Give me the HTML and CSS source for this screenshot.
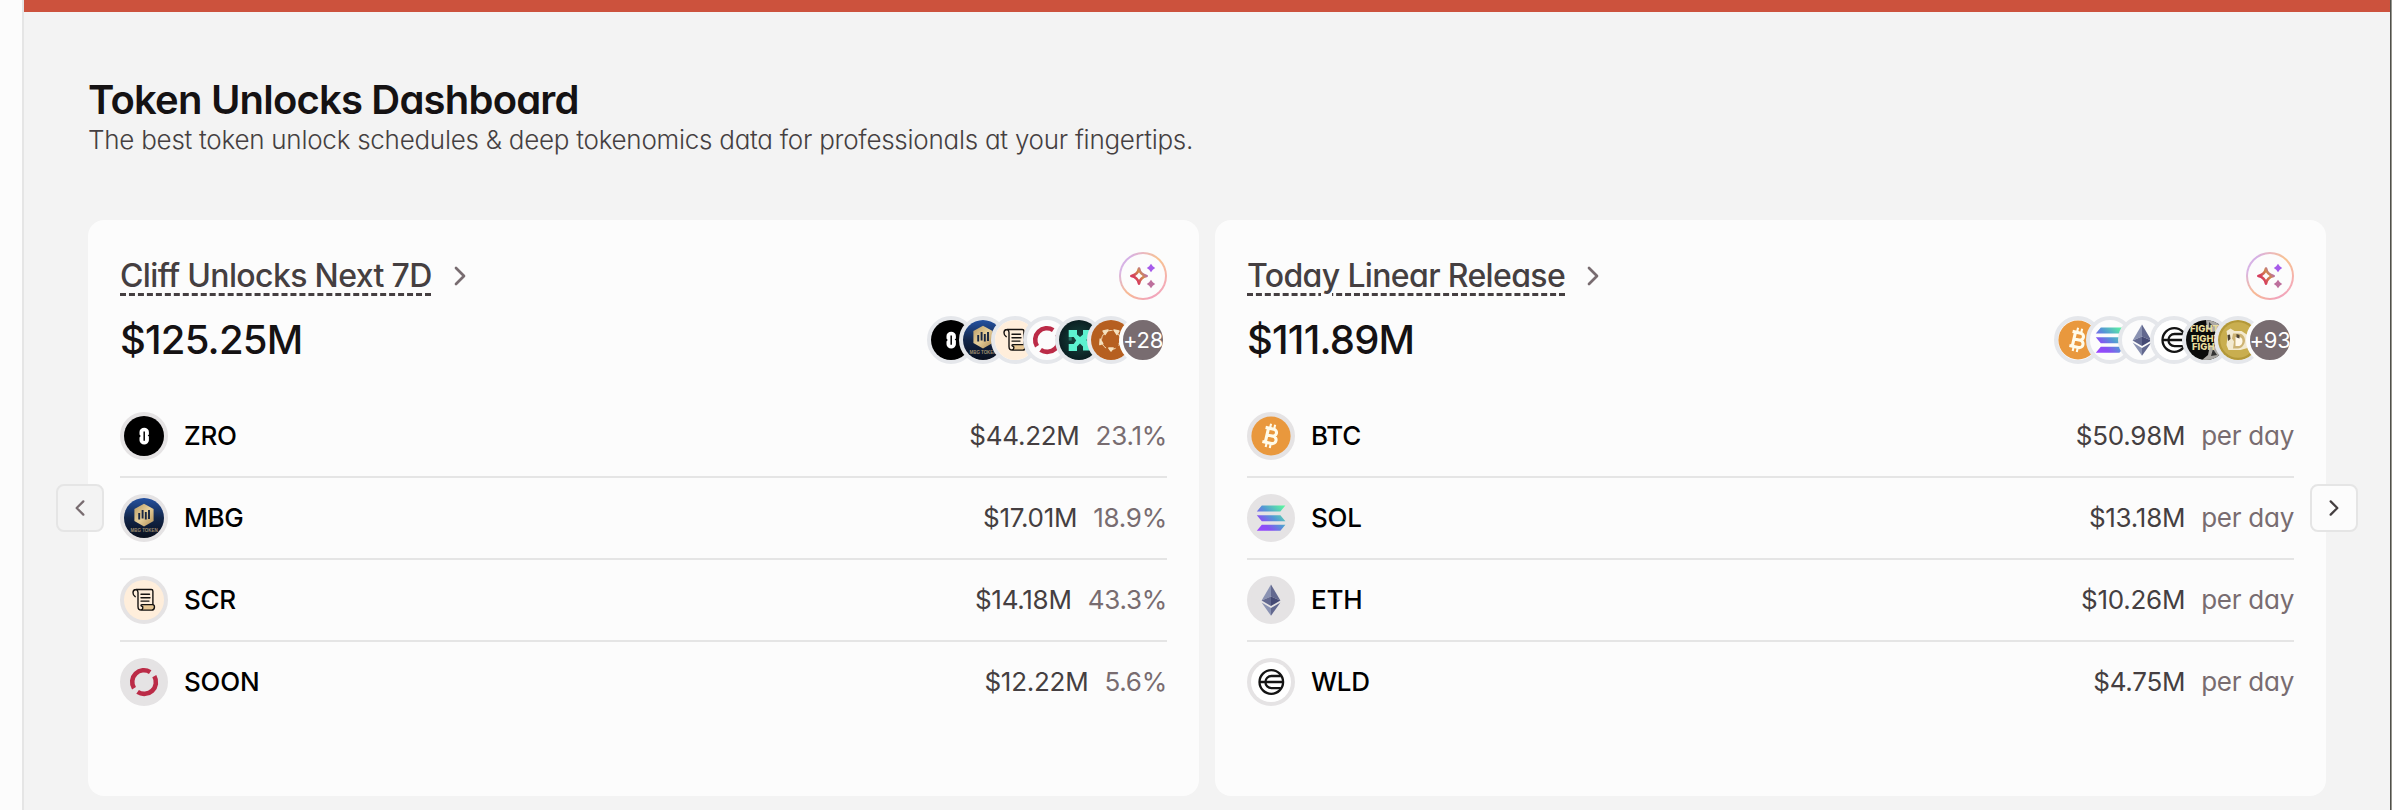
FILE: index.html
```
<!DOCTYPE html>
<html lang="en">
<head>
<meta charset="utf-8">
<title>Token Unlocks Dashboard</title>
<link rel="stylesheet" href="styles.css">
</head>
<body>
<svg class="defs" width="0" height="0" aria-hidden="true">
  <defs>
    <linearGradient id="g-mbg" x1="0" y1="0" x2="0" y2="1"><stop offset="0" stop-color="#2451a0"/><stop offset=".5" stop-color="#12264a"/><stop offset="1" stop-color="#090f1c"/></linearGradient>
    <linearGradient id="g-gold" x1="0" y1="0" x2="1" y2="1"><stop offset="0" stop-color="#b89a63"/><stop offset=".5" stop-color="#e6cf9b"/><stop offset="1" stop-color="#b08d55"/></linearGradient>
    <linearGradient id="g-sol" gradientUnits="userSpaceOnUse" x1="8" y1="32" x2="32" y2="8"><stop offset="0" stop-color="#9945ff"/><stop offset=".25" stop-color="#8752f3"/><stop offset=".55" stop-color="#5497d5"/><stop offset="1" stop-color="#5bf5a0"/></linearGradient>
    <linearGradient id="g-ai" gradientUnits="userSpaceOnUse" x1="11" y1="28" x2="30" y2="14"><stop offset="0" stop-color="#d6345f"/><stop offset=".2" stop-color="#d6405c"/><stop offset=".5" stop-color="#d08a4c"/><stop offset=".8" stop-color="#a85be0"/><stop offset="1" stop-color="#a855f7"/></linearGradient>
    <radialGradient id="g-teal"><stop offset="0" stop-color="#174840"/><stop offset="1" stop-color="#0b1f22"/></radialGradient>
    <clipPath id="disc"><circle cx="20" cy="20" r="20"/></clipPath>
  </defs>
  <symbol id="zro" viewBox="0 0 40 40">
    <circle cx="20" cy="20" r="20" fill="#000"/>
    <path d="M15.500 18.400V16a4.700 4.200 0 0 1 9.400 0v2.600l-1.200 1 1.200 1v3.600a4.700 4.200 0 0 1-9.400 0v-2.800l1.200-1.400z" fill="#fff"/>
    <path d="M20.200 15.600v9.200" stroke="#000" stroke-width="1.500"/>
  </symbol>
  <symbol id="mbg" viewBox="0 0 40 40">
    <circle cx="20" cy="20" r="20" fill="url(#g-mbg)"/>
    <path d="M20 5.800 29.600 11v12L20 28.400 10.400 23V11z" fill="url(#g-gold)"/>
    <path d="M15.200 15v6.500M18.600 12v8.500M21.800 14v7.500M25 12v9" stroke="#182742" stroke-width="1.900"/>
    <text class="mbg-label" x="20" y="34.300" text-anchor="middle" textLength="27">MBG TOKEN</text>
  </symbol>
  <symbol id="scr" viewBox="0 0 40 40">
    <circle cx="20" cy="20" r="20" fill="#ffeedb"/>
    <path d="M19 24.600h9.500c3 0 2.600 5.400-.6 5.400H16.500c2.500-.8 1.500-3.400 2.500-5.400z" fill="#e8c896"/>
    <path d="M28.900 24.300V11.200c0-1.100-.5-1.700-1.600-1.700H12c-2.100.1-3 1.700-3 3.300 0 1.700.8 3 2.200 3.900M12 9.500c1.600.4 2 1.500 2 3v14c0 2.200 1.100 3.600 3.200 3.600h10.500c3.400 0 3.600-5.500.9-5.500H17.800c-1.200.1-.9 1.700.1 1.700 1.500.3 1.200 3.400-1 3.700M17 14.300h8.500M17 17.700h9M17 21.100h8" fill="none" stroke="#161311" stroke-width="1.400" stroke-linecap="round"/>
  </symbol>
  <symbol id="soon" viewBox="0 0 40 40">
    <path d="M10 26.200A11.700 11.700 0 0 1 26.200 10.100M30.300 14.200A11.700 11.700 0 0 1 13.600 29.800" fill="none" stroke="#bb2b47" stroke-width="4.600"/>
  </symbol>
  <symbol id="xai" viewBox="0 0 40 40">
    <circle cx="20" cy="20" r="20" fill="url(#g-teal)"/>
    <path d="M9.700 10H18v4.500l3 2.500 3-2.500V10h8v7l-5 3 5 3v7.500h-8v-4l-3-3-3 3v4.500H9.700V24h5l2.500-3.500-2.500-3.500h-5z" fill="#5df2cf"/>
    <path d="M9.700 17h3v3.500h-3z" fill="#5df2cf" opacity=".35"/>
  </symbol>
  <symbol id="ring" viewBox="0 0 40 40">
    <circle cx="20" cy="20" r="20" fill="#b65f20"/>
    <circle cx="20" cy="20" r="9.500" fill="none" stroke="#f2d9b0" stroke-width="1" stroke-dasharray="6 4"/>
    <path d="m12 11 5-1-3 4.500zM28 11l-5-1 3 4.500zM9.200 19l2.600 4.500-3 1zM30.800 19l-2.600 4.500 3 1zM17.800 28h4.400L20 31z" fill="#f5e0bd" stroke="#f5e0bd" stroke-width="1.400" stroke-linejoin="round"/>
  </symbol>
  <symbol id="btc" viewBox="0 0 40 40">
    <circle cx="20" cy="20" r="19.600" fill="#e9983d"/>
    <g transform="rotate(13 20 20)" fill="none" stroke="#fffbe9">
      <path d="M15.800 12.800V27.200M12.800 12.800h8.400a3.500 3.500 0 0 1 0 7H16M12.800 27.200h9.400a3.700 3.700 0 0 0 0-7.400H16" stroke-width="3.100"/>
      <path d="M17.300 8v4.500M21.500 8v4.500M17.300 27.500V32M21.500 27.500V32" stroke-width="2.100"/>
    </g>
  </symbol>
  <symbol id="sol" viewBox="0 0 40 40">
    <path d="M10.800 7.400H34.400L29.400 13.400H5.800zM5.800 17.200H29.400L34.400 23.200H10.800zM10.800 26.700H34.400L29.400 32.700H5.800z" fill="url(#g-sol)"/>
  </symbol>
  <symbol id="eth" viewBox="0 0 40 40">
    <path d="M20 4.600 10.600 20.600 20 16.400z" fill="#8a92b2"/><path d="M20 4.600 29.400 20.600 20 16.400z" fill="#62688f"/>
    <path d="M20 16.400 10.600 20.600 20 26z" fill="#62688f"/><path d="M20 16.400 29.400 20.600 20 26z" fill="#454a75"/>
    <path d="M10.600 22.500 20 35.800V28z" fill="#8a92b2"/><path d="M29.400 22.500 20 35.800V28z" fill="#62688f"/>
  </symbol>
  <symbol id="wld" viewBox="0 0 40 40">
    <circle cx="20" cy="20" r="20" fill="#fff"/>
    <g fill="none" stroke="#141414" stroke-width="2.300"><circle cx="20.300" cy="20" r="11.800"/><path d="M29.800 14H20.500a6 6 0 0 0 0 12.200h9.300M8.500 20H32"/></g>
  </symbol>
  <symbol id="fight" viewBox="0 0 40 40">
    <g clip-path="url(#disc)">
      <rect width="40" height="40" fill="#0b0b0b"/>
      <path d="M20 0h16l-2 9-7 3-6-3zM24 25l7 2 6-7v13l-7 7H16l6-5z" fill="#aaa8a4"/>
      <path d="M23 2l4 4-4 3zM27 29l4 6-6 1z" fill="#333"/>
      <text class="fight-label" x="4" y="12">FIGHT</text><text class="fight-label" x="5" y="21.500">FIGHT</text><text class="fight-label" x="6" y="30">FIGHT</text>
    </g>
  </symbol>
  <symbol id="doge" viewBox="0 0 40 40">
    <circle cx="20" cy="20" r="20" fill="#b39838"/><circle cx="20" cy="20" r="17.800" fill="#c9ae4f"/>
    <path d="M8.500 11l4-2.500 4 2.500h7l6 4 2 6-2 7-7 2H10.500l-2-5 1-8z" fill="#f3ead0"/>
    <path d="M15 13.500h5c5 0 7 3.500 7 7s-3 8-7 8h-5l1-7-2-3z" fill="#cdb373"/>
    <path d="M17.500 17h3c2.500 0 4 1.500 4 4s-1.500 5-4 5h-3z" fill="#fff8e8"/><path d="M9.500 15l2.500-.5.500 4.500-2.500 2zM18.500 14l3 1v3.500l-3-1z" fill="#4c4234"/>
  </symbol>
  <symbol id="chevron" viewBox="0 0 24 24"><path d="M8 4l8 8-8 8" fill="none" stroke="currentColor" stroke-width="2.700" stroke-linecap="round" stroke-linejoin="round"/></symbol>
  <symbol id="sparkle" viewBox="0 0 44 44">
    <path d="M18 14.500C18.900 19 20.800 21 25.600 22 20.800 23 18.900 25 18 29.600 17.100 25 15.200 23 10.400 22 15.200 21 17.100 19 18 14.500z" fill="#fcfcfc" stroke="url(#g-ai)" stroke-width="2.700" stroke-linejoin="round"/>
    <path d="M30 9.800 31.800 12.200 34.200 14 31.800 15.800 30 18.200 28.200 15.800 25.800 14 28.200 12.200z" fill="#a65bea"/>
    <path d="M30 25.800 31.800 28.200 34.200 30 31.800 31.800 30 34.200 28.200 31.800 25.800 30 28.200 28.200z" fill="#bd6f9c"/>
  </symbol>
</svg>

<div class="app">
  <aside class="rail"></aside>
  <main class="main">
    <div class="banner"></div>
    <header class="heading">
      <h1 class="title">Token Unlocks Dashboard</h1>
      <p class="subtitle">The best token unlock schedules &amp; deep tokenomics data for professionals at your fingertips.</p>
    </header>
    <div class="carousel">
      <section class="card">
        <div class="card-top">
          <a class="card-link"><span class="card-title">Cliff Unlocks Next 7D</span><svg class="card-chevron"><use href="#chevron"/></svg></a>
          <button class="ai"><svg><use href="#sparkle"/></svg></button>
        </div>
        <div class="card-sum">
          <span class="amount">$125.25M</span>
          <div class="stack">
            <span class="coin"><svg><use href="#zro"/></svg></span><span class="coin"><svg><use href="#mbg"/></svg></span><span class="coin"><svg><use href="#scr"/></svg></span><span class="coin"><svg><use href="#soon"/></svg></span><span class="coin"><svg><use href="#xai"/></svg></span><span class="coin"><svg><use href="#ring"/></svg></span><span class="coin more">+28</span>
          </div>
        </div>
        <ul class="rows">
          <li class="row"><span class="coin"><svg><use href="#zro"/></svg></span><span class="ticker">ZRO</span><span class="value">$44.22M</span><span class="note">23.1%</span></li>
          <li class="row"><span class="coin"><svg><use href="#mbg"/></svg></span><span class="ticker">MBG</span><span class="value">$17.01M</span><span class="note">18.9%</span></li>
          <li class="row"><span class="coin"><svg><use href="#scr"/></svg></span><span class="ticker">SCR</span><span class="value">$14.18M</span><span class="note">43.3%</span></li>
          <li class="row"><span class="coin"><svg><use href="#soon"/></svg></span><span class="ticker">SOON</span><span class="value">$12.22M</span><span class="note">5.6%</span></li>
        </ul>
      </section>
      <section class="card">
        <div class="card-top">
          <a class="card-link"><span class="card-title">Today Linear Release</span><svg class="card-chevron"><use href="#chevron"/></svg></a>
          <button class="ai"><svg><use href="#sparkle"/></svg></button>
        </div>
        <div class="card-sum">
          <span class="amount">$111.89M</span>
          <div class="stack">
            <span class="coin"><svg><use href="#btc"/></svg></span><span class="coin"><svg><use href="#sol"/></svg></span><span class="coin"><svg><use href="#eth"/></svg></span><span class="coin"><svg><use href="#wld"/></svg></span><span class="coin"><svg><use href="#fight"/></svg></span><span class="coin"><svg><use href="#doge"/></svg></span><span class="coin more">+93</span>
          </div>
        </div>
        <ul class="rows">
          <li class="row"><span class="coin"><svg><use href="#btc"/></svg></span><span class="ticker">BTC</span><span class="value">$50.98M</span><span class="note">per day</span></li>
          <li class="row"><span class="coin"><svg><use href="#sol"/></svg></span><span class="ticker">SOL</span><span class="value">$13.18M</span><span class="note">per day</span></li>
          <li class="row"><span class="coin"><svg><use href="#eth"/></svg></span><span class="ticker">ETH</span><span class="value">$10.26M</span><span class="note">per day</span></li>
          <li class="row"><span class="coin"><svg><use href="#wld"/></svg></span><span class="ticker">WLD</span><span class="value">$4.75M</span><span class="note">per day</span></li>
        </ul>
      </section>
      <button class="nav prev"><svg><use href="#chevron"/></svg></button>
      <button class="nav next"><svg><use href="#chevron"/></svg></button>
    </div>
  </main>
  <div class="edge"></div>
</div>
</body>
</html>
```
FILE: styles.css
```
* { box-sizing: border-box; margin: 0; padding: 0; }
body { font-family: Inter, "Liberation Sans", sans-serif; font-feature-settings: "cv11"; background: #f3f3f3; color: #151213; overflow: hidden; }
.defs { position: absolute; }
button { font: inherit; }
.app { display: flex; height: 810px; }
.rail { width: 24px; background: #fcfcfc; border-right: 2px solid #e5e5e5; }
.main { flex: 1; display: flex; flex-direction: column; }
.banner { height: 12px; background: #cc523d; }
.edge { width: 2px; background: #96968f; border-left: 1px solid #50514a; }

.heading { height: 208px; padding: 64px 64px 0; }
.title { font-size: 40px; line-height: 48px; font-weight: 600; letter-spacing: -0.02em; }
.subtitle { font-size: 26px; line-height: 32px; font-weight: 300; letter-spacing: -0.01em; color: #453f41; white-space: nowrap; }

.carousel { position: relative; display: flex; gap: 16px; height: 576px; margin: 0 64px; }
.card { flex: 1; background: #fcfcfc; border-radius: 16px; padding: 32px; }
.card-top, .card-sum { display: flex; justify-content: space-between; align-items: center; height: 48px; }
.card-sum { margin-top: 16px; }
.card-link { display: flex; align-items: center; gap: 16px; color: #453f41; }
.card-title { font-size: 32px; line-height: 48px; font-weight: 500; letter-spacing: -0.02em; text-decoration: underline dashed 3px; text-underline-offset: 6px; }
.card-chevron { width: 24px; height: 24px; color: #786c70; }
.ai { width: 48px; height: 48px; border: 2px solid transparent; border-radius: 50%; background: linear-gradient(#fcfcfc, #fcfcfc) padding-box, conic-gradient(#eab8c0, #f8c290 12%, #f5adb5 30%, #f1a3bb 45%, #f8ba94 62%, #d9b5e4 78%, #d5b0e6 90%, #eab8c0) border-box; }
.ai svg { display: block; width: 44px; height: 44px; }
.amount { font-size: 40px; line-height: 48px; font-weight: 500; letter-spacing: -0.02em; }

.coin { flex: none; width: 48px; height: 48px; border: 4px solid #e5e3e4; border-radius: 50%; background: #e5e3e4; }
.coin svg { display: block; width: 40px; height: 40px; }
.stack { display: flex; }
.stack .coin { border-color: #e5e7eb; background: #fcfcfc; }
.stack .coin + .coin { margin-left: -16px; }
.stack .more { display: flex; align-items: center; justify-content: center; border-color: #fcfcfc; background: #786c70; color: #fff; font-size: 22px; letter-spacing: -0.01em; }

.rows { list-style: none; margin-top: 48px; }
.row { display: flex; align-items: center; height: 66px; padding-bottom: 16px; border-bottom: 2px solid #e5e5e5; font-size: 26px; line-height: 36px; letter-spacing: -0.01em; }
.row + .row { height: 82px; padding-top: 16px; }
.row:last-child { border-bottom-color: transparent; }
.ticker { flex: 1; margin-left: 16px; font-weight: 500; color: #000; }
.value { color: #453f41; margin-right: 16px; }
.note { color: #786c70; }

.nav { position: absolute; top: 264px; width: 48px; height: 48px; display: flex; align-items: center; justify-content: center; border: 2px solid #e5e5e5; border-radius: 8px; background: #fcfcfc; color: #453f41; }
.nav svg { width: 20px; height: 20px; }
.prev { left: -32px; background: #f3f3f3; color: #786c70; }
.prev svg { transform: rotate(180deg); }
.next { right: -32px; }

.mbg-label { font: 700 4.5px "Liberation Sans", sans-serif; fill: #9c8b6d; }
.fight-label { font: 800 9.5px Inter, sans-serif; fill: #e8dc9c; letter-spacing: 0; }
```
